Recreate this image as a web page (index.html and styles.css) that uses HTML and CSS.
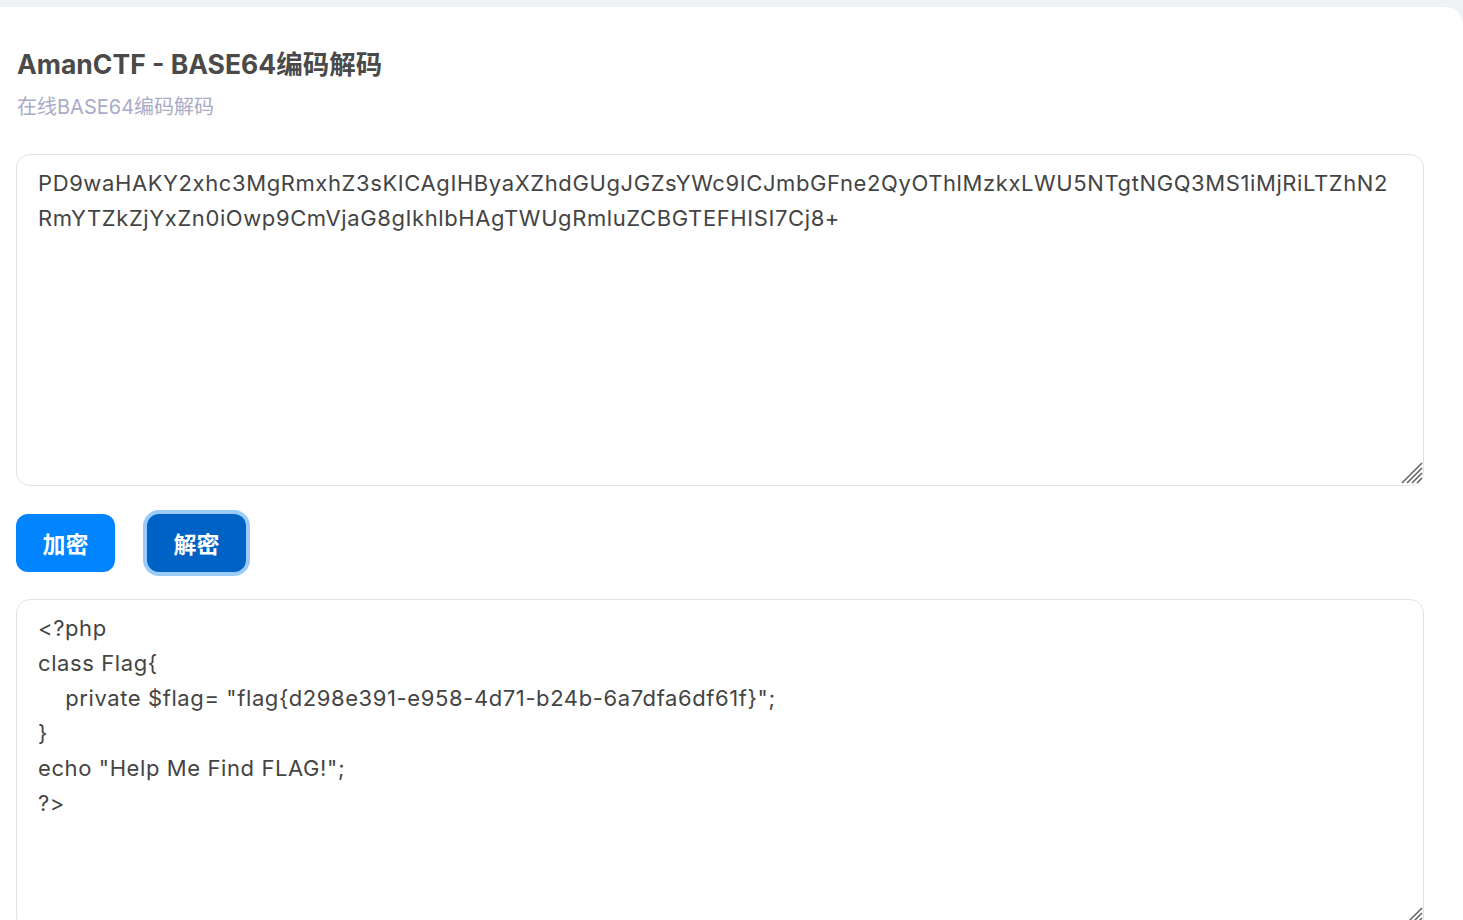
FILE: index.html
```html
<!DOCTYPE html>
<html>
<head>
  <meta charset="UTF-8">
  <meta name="viewport" content="width=device-width, initial-scale=1.0">
  <title>AmanCTF - BASE64编码解码</title>
  <link rel="stylesheet" href="styles.css">
</head>
<body>
  <div class="card">
    <div class="header">
      <h1>AmanCTF - BASE64编码解码</h1>
      <div class="subtitle">在线BASE64编码解码</div>
    </div>

    <div class="box">
      <textarea class="codebox" id="input" spellcheck="false">PD9waHAKY2xhc3MgRmxhZ3sKICAgIHByaXZhdGUgJGZsYWc9ICJmbGFne2QyOThlMzkxLWU5NTgtNGQ3MS1iMjRiLTZhN2RmYTZkZjYxZn0iOwp9CmVjaG8gIkhlbHAgTWUgRmluZCBGTEFHISI7Cj8+</textarea>
      <svg class="grip" width="22" height="22" viewBox="0 0 22 22">
        <path d="M1 21 L21 1 M6 21 L21 6 M11 21 L21 11 M16 21 L21 16" stroke="#666" stroke-width="1.6" />
      </svg>
    </div>

    <div class="actions">
      <button class="btn" id="encodeBtn">加密</button>
      <button class="btn active" id="decodeBtn">解密</button>
    </div>

    <div class="box">
      <textarea class="codebox" id="output" spellcheck="false">&lt;?php
class Flag{
    private $flag= "flag{d298e391-e958-4d71-b24b-6a7dfa6df61f}";
}
echo "Help Me Find FLAG!";
?&gt;</textarea>
      <svg class="grip" width="22" height="22" viewBox="0 0 22 22">
        <path d="M1 21 L21 1 M6 21 L21 6 M11 21 L21 11 M16 21 L21 16" stroke="#666" stroke-width="1.6" />
      </svg>
    </div>
  </div>
</body>
</html>
```

FILE: styles.css
```css
* {
  margin: 0;
  padding: 0;
  box-sizing: border-box;
}

body {
  background: #f0f1f3;
  font-family: Inter, "Noto Sans CJK SC", sans-serif;
  color: #444;
  overflow: hidden;
}

.card {
  margin-top: 7px;
  background: #fff;
  border-top-right-radius: 18px;
  padding: 0 40px 40px 16px;
  min-height: 913px;
}

.header {
  padding-top: 37px;
  margin-bottom: 33px;
}

.header h1 {
  font-size: 26.5px;
  font-weight: 700;
  color: #4a4a4a;
  line-height: 40px;
  padding-left: 1px;
}

.subtitle {
  margin-top: 9px;
  font-size: 20px;
  color: #aaabc6;
  line-height: 28px;
  padding-left: 1px;
}

.box {
  position: relative;
  width: 1408px;
}

.codebox {
  display: block;
  width: 1408px;
  height: 332px;
  padding: 11px 30px 12px 21px;
  border: 1px solid #e2e2e4;
  border-radius: 14px;
  font-family: Inter, "Noto Sans CJK SC", sans-serif;
  font-size: 22px;
  line-height: 35px;
  letter-spacing: 0.6px;
  color: #444;
  background: #fff;
  outline: none;
  resize: none;
}

.grip {
  position: absolute;
  right: 1px;
  bottom: 2px;
  pointer-events: none;
}

.actions {
  display: flex;
  align-items: center;
  gap: 32px;
  margin: 28px 0 27px;
}

.btn {
  width: 99px;
  height: 58px;
  border: none;
  border-radius: 12px;
  background: #0084ff;
  color: #fff;
  font-family: Inter, "Noto Sans CJK SC", sans-serif;
  font-size: 23px;
  font-weight: 700;
  cursor: pointer;
}

.btn.active {
  background: #0062c4;
  box-shadow: 0 0 0 4px #9bccf8;
}
```
